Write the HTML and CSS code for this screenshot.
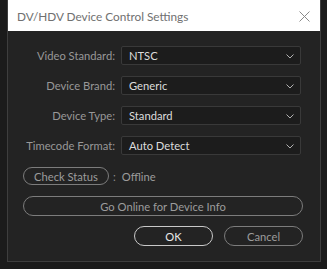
FILE: index.html
```html
<!DOCTYPE html>
<html lang="en">
<head>
  <meta charset="UTF-8" />
  <title>DV/HDV Device Control Settings</title>
  <link rel="stylesheet" href="styles.css">
</head>
<body>
  <div class="dialog">
    <div class="titlebar">
      <span class="title">DV/HDV Device Control Settings</span>
      <svg class="close" width="11" height="11" viewBox="0 0 11 11">
        <path d="M0.5 0.5 L10.5 10.5 M10.5 0.5 L0.5 10.5" stroke="#8a8a8a" stroke-width="1" fill="none"/>
      </svg>
    </div>

    <div class="content">
      <div class="fields">
        <label class="label">Video Standard:</label>
        <div class="select"><span>NTSC</span><svg class="chev" width="8" height="5" viewBox="0 0 8 5"><path d="M0.5 0.5 L4 4 L7.5 0.5" stroke="#b0b0b0" fill="none"/></svg></div>

        <label class="label">Device Brand:</label>
        <div class="select"><span>Generic</span><svg class="chev" width="8" height="5" viewBox="0 0 8 5"><path d="M0.5 0.5 L4 4 L7.5 0.5" stroke="#b0b0b0" fill="none"/></svg></div>

        <label class="label">Device Type:</label>
        <div class="select"><span>Standard</span><svg class="chev" width="8" height="5" viewBox="0 0 8 5"><path d="M0.5 0.5 L4 4 L7.5 0.5" stroke="#b0b0b0" fill="none"/></svg></div>

        <label class="label">Timecode Format:</label>
        <div class="select"><span>Auto Detect</span><svg class="chev" width="8" height="5" viewBox="0 0 8 5"><path d="M0.5 0.5 L4 4 L7.5 0.5" stroke="#b0b0b0" fill="none"/></svg></div>
      </div>

      <div class="status-row">
        <button class="pill check-btn">Check Status</button>
        <span class="colon">:</span>
        <span class="offline">Offline</span>
      </div>

      <button class="pill online-btn">Go Online for Device Info</button>

      <div class="actions">
        <button class="pill action ok">OK</button>
        <button class="pill action">Cancel</button>
      </div>
    </div>
  </div>
</body>
</html>
```

FILE: styles.css
```css
body {
  margin: 0;
  background: #1b1b1b;
  font-family: 'Lato', 'Open Sans', sans-serif;
  font-size: 11.2px;
  height: 269px;
  overflow: hidden;
}

.dialog {
  margin-left: 7px;
  width: 312px;
  height: 261px;
  background: #232323;
  border: 1px solid #3e3e3e;
  border-top: none;
}

.titlebar {
  height: 31px;
  background: #ffffff;
  display: flex;
  align-items: center;
  justify-content: space-between;
  padding: 0 10px 0 9px;
}

.title {
  font-size: 11.8px;
  color: #707070;
  margin-top: 1px;
}

.close {
  margin-top: 1px;
}

.content {
  padding: 15px 16px 0 15px;
}

.fields {
  display: grid;
  grid-template-columns: 92px 180px;
  column-gap: 6px;
  row-gap: 11px;
  align-items: center;
}

.label {
  text-align: right;
  white-space: nowrap;
  color: #989898;
}

.select {
  height: 19px;
  box-sizing: border-box;
  background: #1c1c1c;
  border: 1px solid #393939;
  border-radius: 2px;
  display: flex;
  align-items: center;
  justify-content: space-between;
  padding: 0 6px 0 7px;
  color: #dcdcdc;
}

.chev {
  margin-top: 1px;
}

.pill {
  font-family: inherit;
  font-size: 11.2px;
  background: transparent;
  border: 1px solid #7c7c7c;
  border-radius: 10px;
  color: #9c9c9c;
  padding: 0;
  box-sizing: border-box;
}

.status-row {
  display: flex;
  align-items: center;
  margin-top: 12px;
  height: 18px;
}

.check-btn {
  width: 86px;
  height: 18px;
}

.colon {
  color: #8a8a8a;
  margin-left: 4px;
}

.offline {
  color: #9c9c9c;
  margin-left: 6px;
}

.online-btn {
  display: block;
  width: 280px;
  height: 20px;
  margin-top: 11px;
}

.actions {
  display: flex;
  justify-content: flex-end;
  gap: 11px;
  width: 280px;
  margin-top: 10px;
}

.action {
  width: 79px;
  height: 20px;
}

.ok {
  border-color: #c8c8c8;
  color: #e8e8e8;
}
```
